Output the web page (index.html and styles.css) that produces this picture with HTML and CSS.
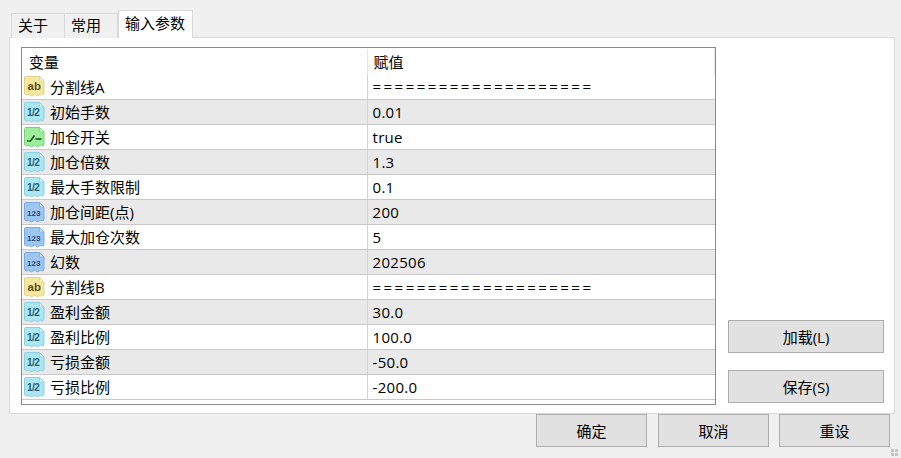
FILE: index.html
```html
<!DOCTYPE html>
<html lang="zh-CN">
<head>
  <meta charset="UTF-8" />
  <title>输入参数</title>
  <link rel="stylesheet" href="styles.css">
</head>
<body>
  <!-- page shape shared by the parameter type icons -->
  <svg class="icon-defs" width="0" height="0">
    <symbol id="icon-page" viewBox="0 0 22 22">
      <path d="M2.5 1.5H16.5L21 6V18Q21 20 19 20Q17.5 18.5 16 20Q14.5 21.5 13 20Q11.5 18.5 10 20Q8.5 21.5 7 20Q5.5 18.5 4 20Q1.5 20 1.5 18V2.5Q1.5 1.5 2.5 1.5Z"/>
      <path class="ic-fold" d="M16.5 1.5V6H21Z"/>
    </symbol>
  </svg>

  <div class="dialog">
    <div class="tabs">
      <div class="tab">关于</div>
      <div class="tab">常用</div>
      <div class="tab tab-active">输入参数</div>
    </div>

    <div class="panel">
      <div class="table-box">
        <table class="params">
          <thead>
            <tr><th>变量</th><th>赋值</th></tr>
          </thead>
          <tbody>
            <tr><td><div class="name"><svg class="icon ic-str" viewBox="0 0 22 22"><use href="#icon-page"/><text x="4.5" y="15">ab</text></svg>分割线A</div></td><td class="line">====================</td></tr>
            <tr><td><div class="name"><svg class="icon ic-dbl" viewBox="0 0 22 22"><use href="#icon-page"/><text x="4" y="15">1/2</text></svg>初始手数</div></td><td>0.01</td></tr>
            <tr><td><div class="name"><svg class="icon ic-bool" viewBox="0 0 22 22"><use href="#icon-page"/><path class="ic-switch" d="M4 15H7.5L11.5 9.5"/><path class="ic-switch" d="M12.5 13H18.5"/></svg>加仓开关</div></td><td>true</td></tr>
            <tr><td><div class="name"><svg class="icon ic-dbl" viewBox="0 0 22 22"><use href="#icon-page"/><text x="4" y="15">1/2</text></svg>加仓倍数</div></td><td>1.3</td></tr>
            <tr><td><div class="name"><svg class="icon ic-dbl" viewBox="0 0 22 22"><use href="#icon-page"/><text x="4" y="15">1/2</text></svg>最大手数限制</div></td><td>0.1</td></tr>
            <tr><td><div class="name"><svg class="icon ic-int" viewBox="0 0 22 22"><use href="#icon-page"/><text x="4" y="15">123</text></svg>加仓间距(点)</div></td><td>200</td></tr>
            <tr><td><div class="name"><svg class="icon ic-int" viewBox="0 0 22 22"><use href="#icon-page"/><text x="4" y="15">123</text></svg>最大加仓次数</div></td><td>5</td></tr>
            <tr><td><div class="name"><svg class="icon ic-int" viewBox="0 0 22 22"><use href="#icon-page"/><text x="4" y="15">123</text></svg>幻数</div></td><td>202506</td></tr>
            <tr><td><div class="name"><svg class="icon ic-str" viewBox="0 0 22 22"><use href="#icon-page"/><text x="4.5" y="15">ab</text></svg>分割线B</div></td><td class="line">====================</td></tr>
            <tr><td><div class="name"><svg class="icon ic-dbl" viewBox="0 0 22 22"><use href="#icon-page"/><text x="4" y="15">1/2</text></svg>盈利金额</div></td><td>30.0</td></tr>
            <tr><td><div class="name"><svg class="icon ic-dbl" viewBox="0 0 22 22"><use href="#icon-page"/><text x="4" y="15">1/2</text></svg>盈利比例</div></td><td>100.0</td></tr>
            <tr><td><div class="name"><svg class="icon ic-dbl" viewBox="0 0 22 22"><use href="#icon-page"/><text x="4" y="15">1/2</text></svg>亏损金额</div></td><td>-50.0</td></tr>
            <tr><td><div class="name"><svg class="icon ic-dbl" viewBox="0 0 22 22"><use href="#icon-page"/><text x="4" y="15">1/2</text></svg>亏损比例</div></td><td>-200.0</td></tr>
          </tbody>
        </table>
      </div>

      <div class="side-buttons">
        <button class="button button-side">加载(L)</button>
        <button class="button button-side">保存(S)</button>
      </div>
    </div>

    <div class="footer">
      <button class="button button-foot button-ok">确定</button>
      <button class="button button-foot">取消</button>
      <button class="button button-foot">重设</button>
    </div>
  </div>

  <div class="grip"><i></i><i></i><i></i><i></i></div>
</body>
</html>
```

FILE: styles.css
```css
/* 1. GLOBAL */
* {
  box-sizing: border-box;
  margin: 0;
  padding: 0;
}
html, body {
  height: 100%;
  overflow: hidden;
}
body {
  font-family: "Open Sans", "Noto Sans CJK SC", sans-serif;
  font-size: 15px;
  color: #000;
  background-color: #f0f0f0;
}
.icon-defs {
  display: block;
  height: 0;
}

/* 2. DIALOG FRAME */
.dialog {
  padding: 10px 6px 0 9px;
}

/* 3. TABS */
.tabs {
  display: flex;
  align-items: flex-end;
  height: 28px;
  padding-left: 2px;
  position: relative;
  z-index: 1;
}
.tab {
  height: 25px;
  width: 54px;
  margin-right: -1px;
  padding-left: 6px;
  border: 1px solid #d9d9d9;
  border-bottom: none;
  line-height: 23px;
  background-color: #f0f0f0;
}
.tab-active {
  height: 28px;
  width: 75px;
  margin-left: 1px;
  padding-left: 6px;
  background-color: #fff;
  line-height: 24px;
}

/* 4. PANEL */
.panel {
  display: flex;
  height: 377px;
  margin-top: -1px;
  padding: 9px 0 0 11px;
  background-color: #fff;
  border: 1px solid #d9d9d9;
}

/* 5. PARAMETER TABLE */
.table-box {
  width: 695px;
  height: 358px;
  border: 1px solid #8a8a8a;
  padding: 1px 0 0 0;
}
.params {
  width: 693px;
  table-layout: fixed;
  border-collapse: collapse;
}
.params th:first-child,
.params td:first-child {
  width: 345px;
}
.params th {
  height: 25px;
  padding: 0 0 0 7px;
  font-weight: 400;
  text-align: left;
}
.params th + th {
  padding-left: 6px;
  border-left: 1px solid #e5e5e5;
  border-right: 1px solid #e5e5e5;
}
.params td {
  height: 25px;
  padding: 0 0 0 5px;
  border-bottom: 1px solid #c8c8c8;
  white-space: nowrap;
}
.params td:first-child {
  padding-left: 1px;
}
.params td + td {
  border-left: 1px solid #d4d4d4;
  letter-spacing: 0.3px;
}
.params tbody tr:nth-child(even) td {
  background-color: #e9e9e9;
}
.params .line {
  letter-spacing: 2.47px;
}
.name {
  display: flex;
  align-items: center;
  gap: 5px;
}

/* 6. ICONS */
.icon {
  width: 22px;
  height: 22px;
  flex: none;
  stroke-width: 1;
}
.icon text {
  font-family: "Liberation Sans", sans-serif;
  font-weight: 700;
  stroke: none;
}
.ic-fold {
  fill: #fff;
  opacity: 0.6;
}
.ic-str { fill: #f6e79e; stroke: #e2d28c; }
.ic-dbl { fill: #ace6f2; stroke: #8ad0e0; }
.ic-int { fill: #9cc5f2; stroke: #7cabe0; }
.ic-bool { fill: #9cee9c; stroke: #7ad27a; }
.ic-str text {
  font-size: 11.5px;
  fill: #5c5220;
}
.ic-dbl text {
  font-size: 10px;
  fill: #2c6072;
  letter-spacing: -0.6px;
}
.ic-int text {
  font-size: 8px;
  fill: #1f4a7c;
}
.icon .ic-switch {
  fill: none;
  stroke: #1d5a1d;
  stroke-width: 1.7;
}

/* 7. BUTTONS */
.button {
  font: inherit;
  color: #000;
  height: 33px;
  background-color: #e1e1e1;
  border: 1px solid #adadad;
  cursor: pointer;
}
.side-buttons {
  display: flex;
  flex-direction: column;
  gap: 17px;
  margin: 273px 0 0 12px;
}
.button-side {
  width: 156px;
}
.footer {
  display: flex;
  justify-content: flex-end;
  gap: 10px;
  padding-right: 5px;
}
.button-foot {
  width: 111px;
}
.button-ok {
  margin-right: 1px;
}

/* 8. RESIZE GRIP */
.grip {
  position: absolute;
  right: 3px;
  bottom: 2px;
  display: grid;
  grid-template-columns: 3px 3px;
  gap: 1px;
}
.grip i {
  height: 3px;
  background-color: #c4c4c4;
}
```
